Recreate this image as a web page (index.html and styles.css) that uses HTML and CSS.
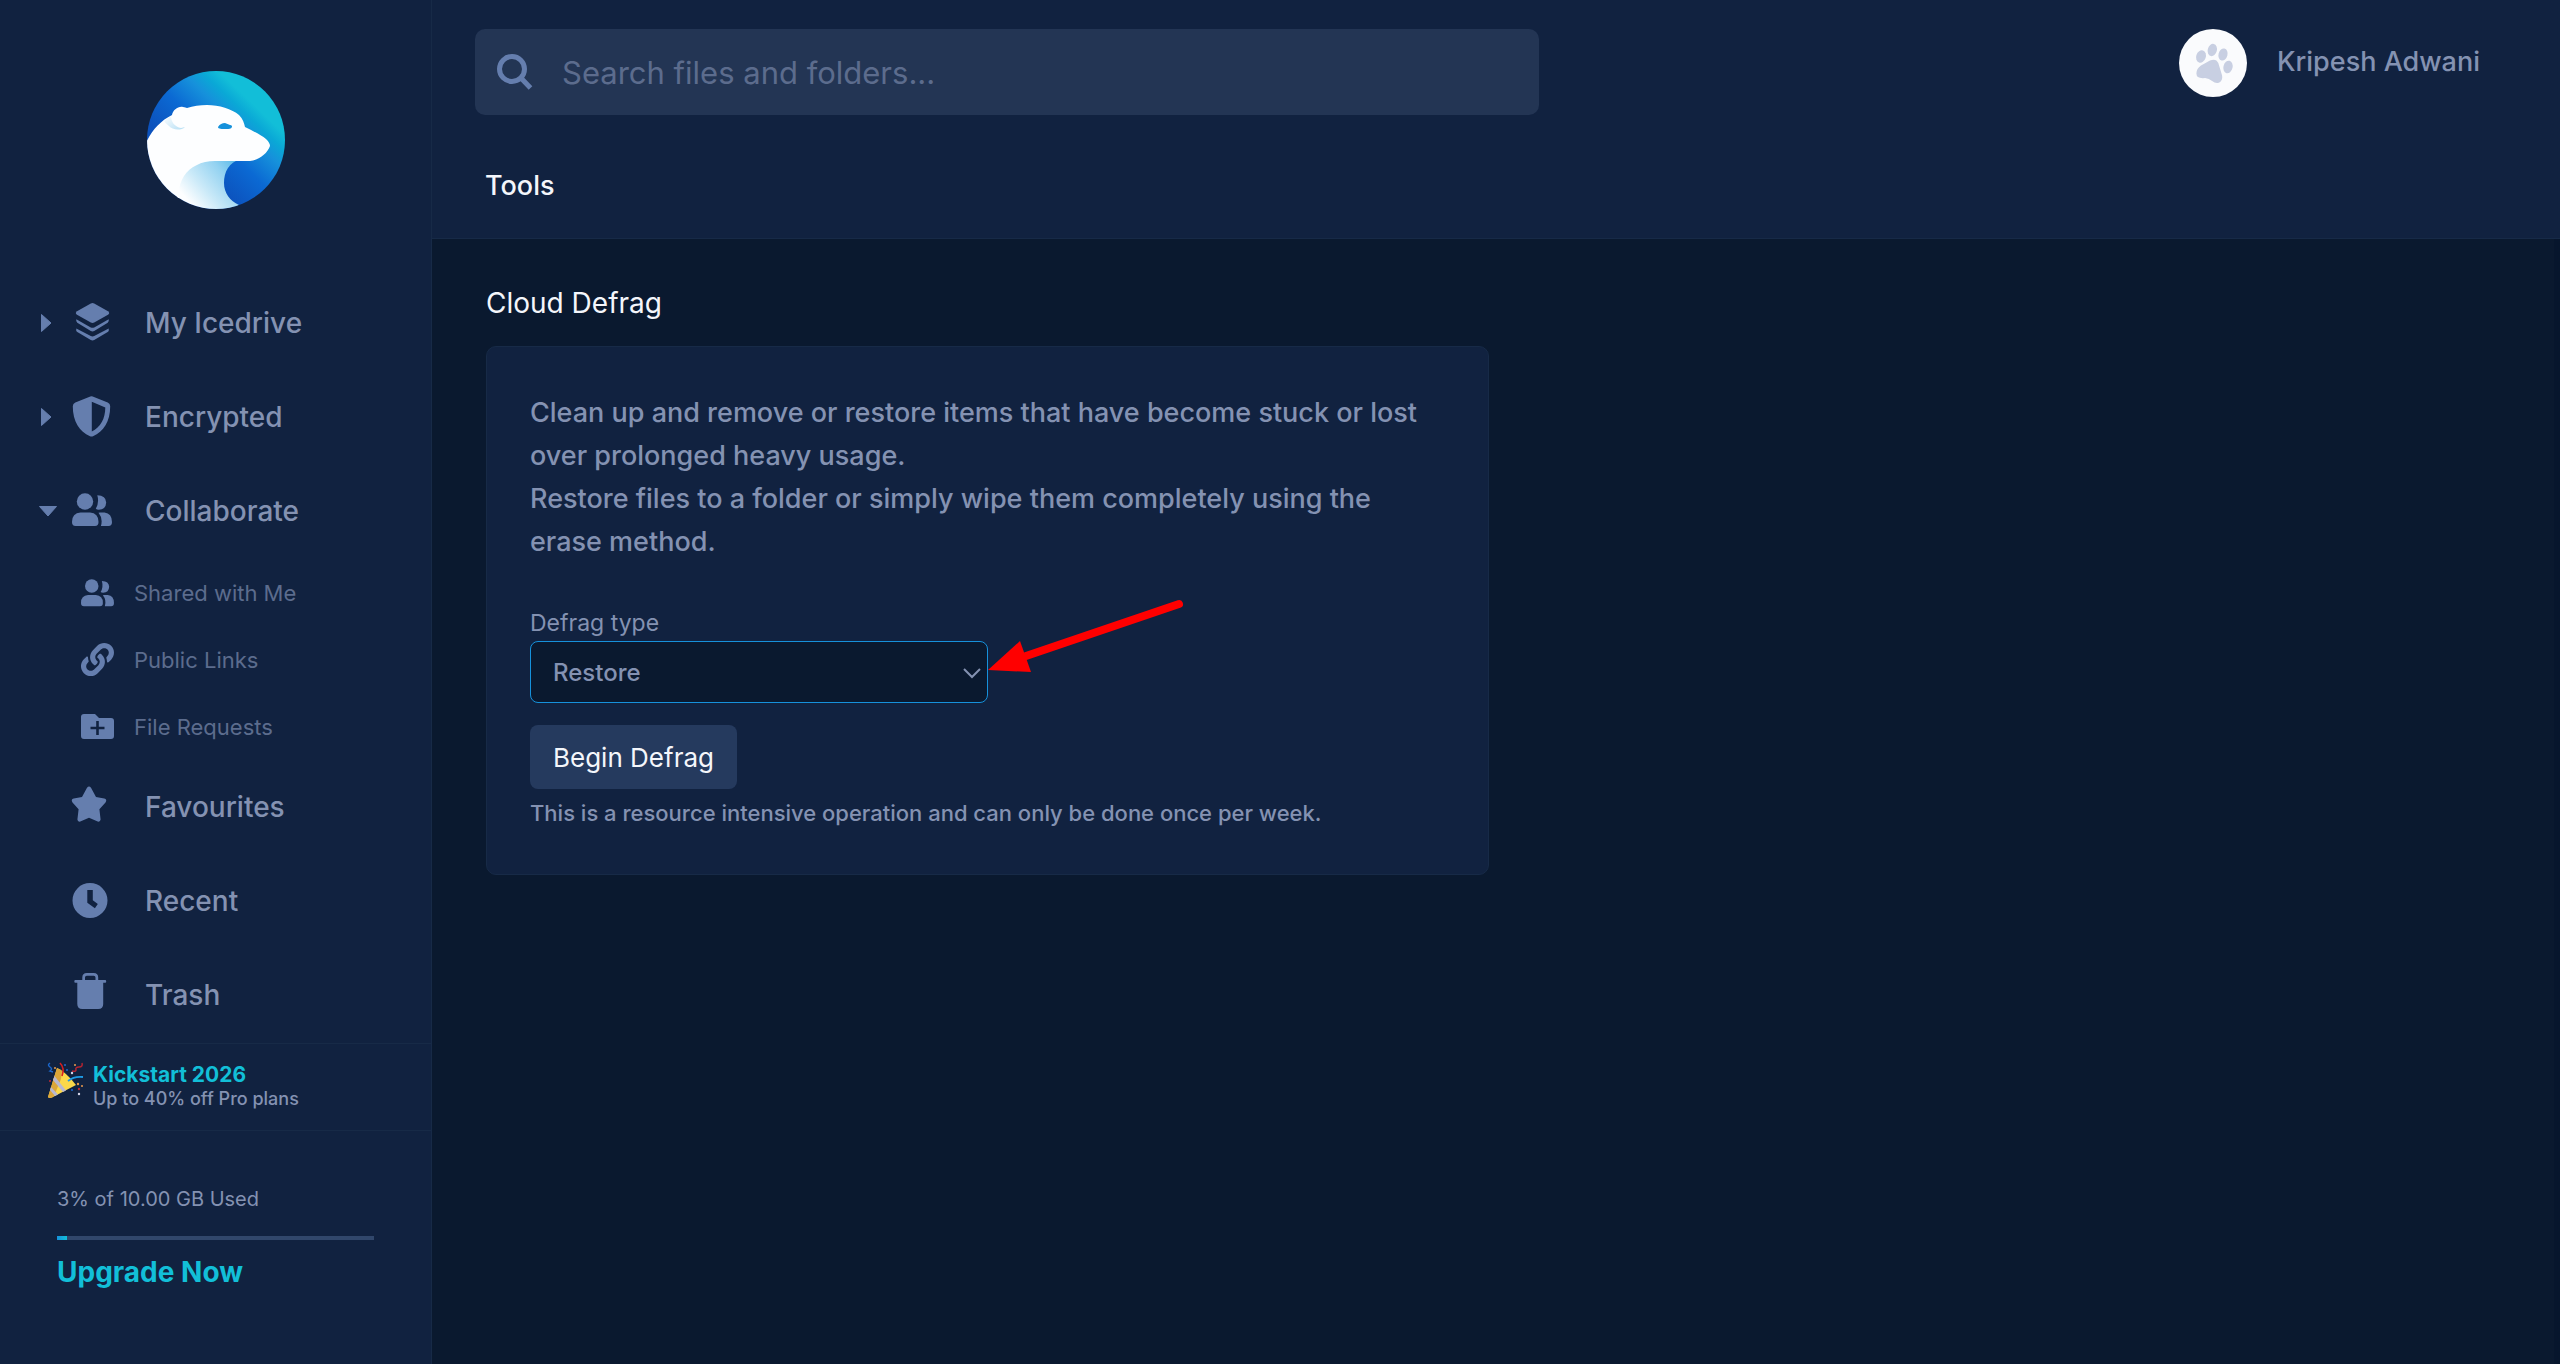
FILE: index.html
```html
<!DOCTYPE html>
<html lang="en">
<head>
<meta charset="utf-8">
<meta name="viewport" content="width=device-width, initial-scale=1">
<title>Icedrive - Tools</title>
<link rel="stylesheet" href="styles.css">
</head>
<body>
<div class="app">
  <aside class="sidebar">
    <a class="logo" href="#" aria-label="Icedrive home">
      <svg viewBox="0 0 138 138" width="138" height="138" aria-hidden="true">
        <defs>
          <linearGradient id="sky" gradientUnits="userSpaceOnUse" x1="4" y1="54" x2="63" y2="-8">
            <stop offset="0" stop-color="#0c52bd"/><stop offset=".4" stop-color="#0b69d3"/><stop offset=".7" stop-color="#1691db"/><stop offset=".86" stop-color="#0aa8d6"/><stop offset="1" stop-color="#12bed8"/>
          </linearGradient>
          <linearGradient id="neck" gradientUnits="userSpaceOnUse" x1="38" y1="126" x2="84" y2="88">
            <stop offset="0" stop-color="#fdfeff"/><stop offset=".35" stop-color="#c9e9f8"/><stop offset=".75" stop-color="#93d2f1"/><stop offset="1" stop-color="#62bdea"/>
          </linearGradient>
          <linearGradient id="ear" x1="1" y1="1" x2="0" y2="0">
            <stop offset="0" stop-color="#b4def4"/><stop offset="1" stop-color="#fdfeff"/>
          </linearGradient>
          <clipPath id="disc"><circle cx="69" cy="69" r="69"/></clipPath>
        </defs>
        <g clip-path="url(#disc)">
          <rect width="138" height="138" fill="url(#sky)"/>
          <path d="M30 138V88h64c-12 3-17 13-17 24 0 10 6 18 15 22l-6 4z" fill="url(#neck)"/>
          <path d="M-2 74C4 60 13 50 25 44c1-5 6-9 11-8 2 0 3 1 4 1 6-2 13-3 20-3 12 0 25 4 32 10 4 4 5 8 6 12 8 4 16 8 21 12 3 3 4 5 4 7-3 8-11 14-20 15H68c-14 0-25 6-31 15-3 5-5 10-5 16v17H-2z" fill="#fdfeff"/>
          <path d="M24 45c0 6 4 11 10 12l4-1c-4 4-13 3-16-1-2-2-4-3-5-5z" fill="url(#ear)"/>
          <path d="M71 56c2-3 4-4 7-4l5 2c2 0 2 1 2 2-1 2-3 2-6 2-4 0-8 0-8-2z" fill="#1691db"/>
        </g>
      </svg>
    </a>

    <nav class="nav" aria-label="Main">
      <ul class="nav-list">
        <li class="nav-row">
          <button class="toggle" type="button" aria-label="Expand My Icedrive"><svg viewBox="0 0 20 20" width="20" height="20"><path d="M3.500 1.500v17l9.500-8.500z" stroke-linejoin="round" stroke="currentColor"/></svg></button>
          <a class="nav-link" href="#">
            <svg class="icon" viewBox="0 0 40 40" width="40" height="40"><path d="M18.800.5Q20.500-.4 22.200.5L36 8.200q2.400 1.800 0 3.600L22.200 19.500q-1.700.9-3.400 0L5 11.800q-2.400-1.800 0-3.600z"/><path d="M4.300 16.200 18.800 24.400q1.700.9 3.400 0L36.700 16.200q.6 2.500-1 3.600L22.200 28q-1.700.9-3.400 0L5.300 19.800q-1.600-1.100-1-3.600z"/><path d="M4.300 25.400 18.800 33q1.700.9 3.400 0l14.500-7.600q.6 2.500-1 3.600L22.200 37q-1.700.9-3.400 0L5.300 29q-1.600-1.100-1-3.600z"/></svg>
            <span>My Icedrive</span></a>
        </li>
        <li class="nav-row">
          <button class="toggle" type="button" aria-label="Expand Encrypted"><svg viewBox="0 0 20 20" width="20" height="20"><path d="M3.500 1.500v17l9.500-8.500z" stroke-linejoin="round" stroke="currentColor"/></svg></button>
          <a class="nav-link" href="#">
            <svg class="icon" viewBox="0 0 40 40" width="40" height="40"><path fill-rule="evenodd" d="M18.300-.6q1.200-.5 2.400 0l15 6.200q2.500 1 2.500 3.600C38.200 24.500 31.500 34.700 21 39.300q-1.500.6-3 0C7.500 34.700.8 24.500.8 9.200q0-2.600 2.500-3.600zM19.800 4.800v29.800C28.500 30.200 33.300 21.500 33.300 10.400z"/></svg>
            <span>Encrypted</span></a>
        </li>
        <li class="nav-row">
          <button class="toggle" type="button" aria-label="Collapse Collaborate"><svg viewBox="0 0 20 20" width="20" height="20"><path d="M1.500 5.500h17L10 15z" stroke-linejoin="round" stroke="currentColor"/></svg></button>
          <a class="nav-link" href="#">
            <svg class="icon" viewBox="0 0 40 40" width="40" height="40"><circle cx="13" cy="10.500" r="8.200"/><path d="M8.500 21.500h9.500q8.500.5 8.500 9.500 0 4-3.500 4H3.500Q0 35 0 31q0-9 8.500-9.500z"/><path d="M25.300 4.300q8.700.2 8.900 7.200-.4 7.100-7.400 7.200-2 0-3-.9 3.600-6.200 1.500-13.500zM28 21.500h4.500q7.400.9 7.500 9.500 0 4-3.500 4h-7.600q2.300-7.600-2.400-13.300z"/></svg>
            <span>Collaborate</span></a>
        </li>
      </ul>
      <ul class="sub-list">
        <li><a class="sub-link" href="#"><svg class="icon" viewBox="0 2 40 34" width="33" height="28"><circle cx="13" cy="10.500" r="8.200"/><path d="M8.500 21.500h9.500q8.500.5 8.500 9.500 0 4-3.500 4H3.500Q0 35 0 31q0-9 8.500-9.500z"/><path d="M25.300 4.300q8.700.2 8.900 7.200-.4 7.100-7.400 7.200-2 0-3-.9 3.600-6.200 1.500-13.500zM28 21.500h4.500q7.400.9 7.500 9.500 0 4-3.500 4h-7.600q2.300-7.600-2.400-13.300z"/></svg><span>Shared with Me</span></a></li>
        <li><a class="sub-link" href="#"><svg class="icon" viewBox="0 0 512 512" width="33" height="33"><path d="M326.612 185.391c59.747 59.809 58.927 155.698.36 214.590-.11.120-.24.250-.36.370l-67.200 67.200c-59.270 59.270-155.699 59.262-214.960 0-59.270-59.260-59.270-155.700 0-214.960l37.106-37.106c9.840-9.840 26.786-3.300 27.294 10.606.648 17.722 3.826 35.527 9.690 52.721 1.986 5.822.567 12.262-3.783 16.612l-13.087 13.087c-28.026 28.026-28.905 73.660-1.155 101.960 28.024 28.579 74.086 28.749 102.325.51l67.200-67.190c28.191-28.191 28.073-73.757 0-101.830-3.701-3.694-7.429-6.564-10.341-8.569a16.037 16.037 0 0 1-6.947-12.606c-.396-10.567 3.348-21.456 11.698-29.806l21.054-21.055c5.521-5.521 14.182-6.199 20.584-1.731a152.482 152.482 0 0 1 20.522 17.197zM467.547 44.449c-59.261-59.262-155.690-59.270-214.960 0l-67.200 67.200c-.12.120-.25.250-.36.370-58.566 58.892-59.387 154.781.36 214.590a152.454 152.454 0 0 0 20.521 17.196c6.402 4.468 15.064 3.789 20.584-1.731l21.054-21.055c8.350-8.350 12.094-19.239 11.698-29.806a16.037 16.037 0 0 0-6.947-12.606c-2.912-2.005-6.640-4.875-10.341-8.569-28.073-28.073-28.191-73.639 0-101.830l67.200-67.190c28.239-28.239 74.300-28.069 102.325.51 27.750 28.300 26.872 73.934-1.155 101.960l-13.087 13.087c-4.350 4.350-5.769 10.790-3.783 16.612 5.864 17.194 9.042 34.999 9.690 52.721.509 13.906 17.454 20.446 27.294 10.606l37.106-37.106c59.271-59.259 59.271-155.699.001-214.959z"/></svg><span>Public Links</span></a></li>
        <li><a class="sub-link" href="#"><svg class="icon" viewBox="0 0 33 25" width="33" height="25"><path fill-rule="evenodd" d="M3 0h11l4 4h12q3 0 3 3v15q0 3-3 3H3q-3 0-3-3V3q0-3 3-3zm12.200 7v5.700H9.500v2.600h5.700V21h2.600v-5.700h5.700v-2.600h-5.700V7z"/></svg><span>File Requests</span></a></li>
      </ul>
      <ul class="nav-list">
        <li class="nav-row nav-leaf"><a class="nav-link" href="#">
            <svg class="icon" viewBox="0 0 40 40" width="40" height="40"><path d="M15 .8q2-2.600 4 0l5 9.300 8.300 1.500q3.200 1 1.200 3.800l-6.100 6.900 1.200 10.300q-.3 2.700-2.900 2L17 30.700 8.300 34.600q-2.600.7-2.900-2l1.200-10.300L.5 15.400q-2-2.800 1.200-3.800L10 10.100z"/></svg>
            <span>Favourites</span></a></li>
        <li class="nav-row nav-leaf"><a class="nav-link" href="#">
            <svg class="icon" viewBox="0 0 40 40" width="40" height="40"><path fill-rule="evenodd" d="M18 2a17.500 17.500 0 1 1 0 35 17.500 17.500 0 0 1 0-35zM15.300 9v12.800l7.600 5.400 2.900-4.200-5-3.700V9z"/></svg>
            <span>Recent</span></a></li>
        <li class="nav-row nav-leaf"><a class="nav-link" href="#">
            <svg class="icon" viewBox="0 0 40 40" width="40" height="40"><path fill-rule="evenodd" d="M10.300 5V2.500Q10.300-2 14.800-2h6.900q4.500 0 4.500 4.500V5h7q1 0 1 1.400 0 1.300-1 1.300h-2V29q0 5-5 5H10.300q-5 0-5-5V7.700h-2q-1 0-1-1.300Q2.300 5 3.300 5zm2.700 0h10.500V2.500q0-1.800-1.800-1.800h-6.900q-1.800 0-1.800 1.800z"/></svg>
            <span>Trash</span></a></li>
      </ul>
    </nav>

    <a class="promo" href="#">
      <svg class="promo-icon" viewBox="0 0 36 36" width="36" height="36" aria-hidden="true">
        <path d="M1 35 10 6q9 4 19 17L5 35.500q-3 1-4-.5z" fill="#fbd84a"/><path d="M1 35 10 6q3 1 5 3l-1 8-7 17-2 1.500q-3 1-4-.5z" fill="#dca63a"/>
        <path d="M7.500 14 19 28.500l-3 1.500L6 18zM4 25l7 7.500-3 1.500-5-6z" fill="#b9b8cf"/>
        <path d="M13 1q5 5 2 13" fill="none" stroke="#d81e1e" stroke-width="1.600"/>
        <path d="M21 19q6-5 15-4" fill="none" stroke="#1e9be6" stroke-width="1.800"/>
        <path d="M3 1q-3 2 0 4t0 4l3 1" fill="none" stroke="#1c68cc" stroke-width="1.500"/>
        <path d="M35 1q1 4-3 4-4 0-3 3 0 2-4 1" fill="none" stroke="#b32431" stroke-width="1.500"/>
        <g fill="#e99a4c"><circle cx="8" cy="6" r="1"/><circle cx="28" cy="3" r="1"/><circle cx="31" cy="22" r="1.200"/><circle cx="35" cy="24" r="1"/></g>
        <g fill="#d4d6ea"><circle cx="25" cy="11" r="1.200"/><circle cx="32" cy="32" r="1.200"/></g>
        <g fill="#1c68cc"><circle cx="20" cy="8" r="1"/><circle cx="25" cy="28" r="1"/><circle cx="18" cy="3" r="1"/></g>
        <g fill="#c02a34"><circle cx="3" cy="19" r="1"/><circle cx="32" cy="27" r="1.200"/></g>
      </svg>
      <span class="promo-text"><strong class="promo-title">Kickstart 2026</strong><span class="promo-sub">Up to 40% off Pro plans</span></span>
    </a>

    <div class="storage">
      <p class="storage-label" id="used">3% of 10.00 GB Used</p>
      <div class="meter" role="progressbar" aria-labelledby="used" aria-valuenow="3" aria-valuemin="0" aria-valuemax="100"><div class="meter-fill" style="width:3%"></div></div>
      <a class="upgrade" href="#">Upgrade Now</a>
    </div>
  </aside>

  <div class="main">
    <header class="header">
      <div class="topbar">
        <label class="search">
          <svg class="icon" viewBox="0 0 36 36" width="36" height="36" aria-hidden="true"><path d="M15 2.500a12.500 12.500 0 1 1 0 25 12.500 12.500 0 0 1 0-25zM23.500 23.500l10 10.500" fill="none" stroke="currentColor" stroke-width="5"/></svg>
          <input class="search-input" type="search" placeholder="Search files and folders..." aria-label="Search files and folders">
        </label>
        <a class="user" href="#">
          <svg viewBox="0 0 68 68" width="68" height="68" aria-hidden="true"><circle cx="34" cy="34" r="34" fill="#fafbfd"/><g fill="#c8cfe2"><ellipse cx="22" cy="27.500" rx="4.800" ry="6.300" transform="rotate(18 22 27.500)"/><ellipse cx="33.300" cy="21" rx="4.600" ry="6.300" transform="rotate(14 33.300 21)"/><ellipse cx="44" cy="25.500" rx="4.500" ry="6.200" transform="rotate(14 44 25.500)"/><ellipse cx="49" cy="38" rx="4.600" ry="6.400" transform="rotate(14 49 38)"/><path d="M31 31.500q6-2.500 8.300 2.500l3.800 12.500q1 6-4 7.500-3 .6-6-2t-7-3q-8.600 1-8.700-4.500 0-5 4.600-8z"/></g></svg>
          <span class="user-name">Kripesh Adwani</span>
        </a>
      </div>
      <h1 class="page-title">Tools</h1>
    </header>

    <main class="content">
      <h2 class="section-title">Cloud Defrag</h2>
      <section class="card">
        <p class="card-text">Clean up and remove or restore items that have become stuck or lost over prolonged heavy usage.<br>Restore files to a folder or simply wipe them completely using the erase method.</p>
        <label class="field-label" for="defrag-type">Defrag type</label>
        <div class="select-wrap">
          <select class="select" id="defrag-type"><option>Restore</option><option>Erase</option></select>
          <svg class="chevron" viewBox="0 0 18 10" width="18" height="10" aria-hidden="true"><path d="M1 1l8 8 8-8" fill="none" stroke="currentColor" stroke-width="2"/></svg>
          <svg class="pointer" viewBox="0 0 200 80" width="200" height="80" aria-hidden="true"><path d="M38 64 191 12" stroke="#f00" stroke-width="8" stroke-linecap="round"/><path d="M0 78 32 49l11 31z" fill="#f00"/></svg>
        </div>
        <button class="button" type="button">Begin Defrag</button>
        <p class="note">This is a resource intensive operation and can only be done once per week.</p>
      </section>
    </main>
  </div>
</div>
</body>
</html>
```
FILE: styles.css
```css
:root {
  --navy: #0a192f;
  --panel: #112240;
  --line: #172a47;
  --field: #233554;
  --slate: #8492b2;
  --muted: #5c6c8d;
  --icon: #657eae;
  --accent: #12bfd8;
  --blue: #1691db;
}
* { box-sizing: border-box; }
body {
  margin: 0;
  background: var(--navy);
  color: var(--slate);
  font-family: Inter, "Liberation Sans", sans-serif;
  font-size: 28px;
}
a { color: inherit; text-decoration: none; }
ul { list-style: none; margin: 0; padding: 0; }
p, h1, h2 { margin: 0; font-weight: 400; }
svg { display: block; flex: none; overflow: visible; }
button { border: 0; padding: 0; background: none; font: inherit; color: inherit; }

.app { display: flex; min-height: 100vh; }

.sidebar {
  flex: none;
  width: 432px;
  background: var(--panel);
  border-right: 1px solid var(--line);
}
.logo { display: block; width: 138px; margin: 71px 0 67px 147px; }
.icon { fill: currentColor; color: var(--icon); }
.nav-row { display: flex; align-items: center; height: 94px; padding-left: 38px; }
.nav-leaf { padding-left: 72px; }
.toggle { width: 34px; color: var(--icon); }
.toggle svg { fill: currentColor; }
.nav-link { display: flex; align-items: center; gap: 33px; font-weight: 500; }
.sub-list { padding: 1px 0 0 81px; }
.sub-link { display: flex; align-items: center; gap: 20px; height: 67px; font-size: 22px; color: var(--muted); }
.promo {
  display: flex;
  gap: 10px;
  height: 88px;
  margin-top: 1px;
  padding: 18px 47px;
  border-top: 1px solid var(--line);
  border-bottom: 1px solid var(--line);
}
.promo-text { display: flex; flex-direction: column; }
.promo-title { font-size: 21px; line-height: 26px; color: var(--accent); }
.promo-sub { font-size: 18px; font-weight: 500; line-height: 22px; }
.storage { padding: 56px 57px; }
.storage-label { font-size: 20px; line-height: 24px; }
.meter { height: 4px; margin: 25px 0 16px; background: #31476b; }
.meter-fill { height: 100%; background: linear-gradient(90deg, var(--blue), var(--accent)); }
.upgrade { display: block; font-weight: 700; line-height: 32px; color: var(--accent); }

.main { display: flex; flex-direction: column; flex: 1; min-width: 0; }
.header { height: 239px; background: var(--panel); border-bottom: 1px solid var(--line); }
.topbar { display: flex; justify-content: space-between; align-items: flex-start; padding: 29px 80px 0 43px; }
.search {
  display: flex;
  align-items: center;
  gap: 29px;
  flex: 0 1 1064px;
  height: 86px;
  padding: 0 22px;
  border-radius: 10px;
  background: var(--field);
}
.search-input {
  flex: 1;
  min-width: 0;
  padding: 0;
  border: 0;
  outline: 0;
  background: none;
  color: var(--slate);
  font: inherit;
  font-size: 31px;
}
.search-input::placeholder { color: var(--muted); opacity: 1; }
.user { display: flex; align-items: center; gap: 30px; font-size: 27px; font-weight: 500; }
.user-name { padding-bottom: 4px; }
.page-title { margin: 55px 0 0 53px; font-size: 27px; line-height: 32px; font-weight: 500; color: #f4f6fb; }

.content { flex: 1; padding: 48px 48px 48px 54px; border-right: 6px solid #07162d; }
.section-title { font-size: 28px; line-height: 32px; color: #f4f6fb; }
.card {
  max-width: 1003px;
  margin-top: 27px;
  padding: 44px 43px 47px;
  border: 1px solid var(--line);
  border-radius: 10px;
  background: var(--panel);
}
.card-text { font-size: 27px; font-weight: 500; line-height: 43px; }
.field-label { display: block; margin-top: 46px; font-size: 23px; line-height: 28px; }
.select-wrap { position: relative; width: 458px; margin-top: 4px; }
.select {
  display: block;
  width: 100%;
  height: 62px;
  padding: 0 22px;
  appearance: none;
  border: 1px solid var(--blue);
  border-radius: 8px;
  background: var(--navy);
  color: var(--slate);
  font: inherit;
  font-size: 24px;
  font-weight: 500;
}
.chevron { position: absolute; right: 7px; top: 27px; pointer-events: none; }
.pointer { position: absolute; left: 458px; top: -49px; pointer-events: none; }
.button {
  height: 64px;
  margin-top: 22px;
  padding: 0 23px;
  border-radius: 8px;
  background: #253a5e;
  color: #f4f6fb;
  font-size: 26px;
}
.note { margin-top: 10px; font-size: 22px; font-weight: 500; line-height: 28px; }
```
